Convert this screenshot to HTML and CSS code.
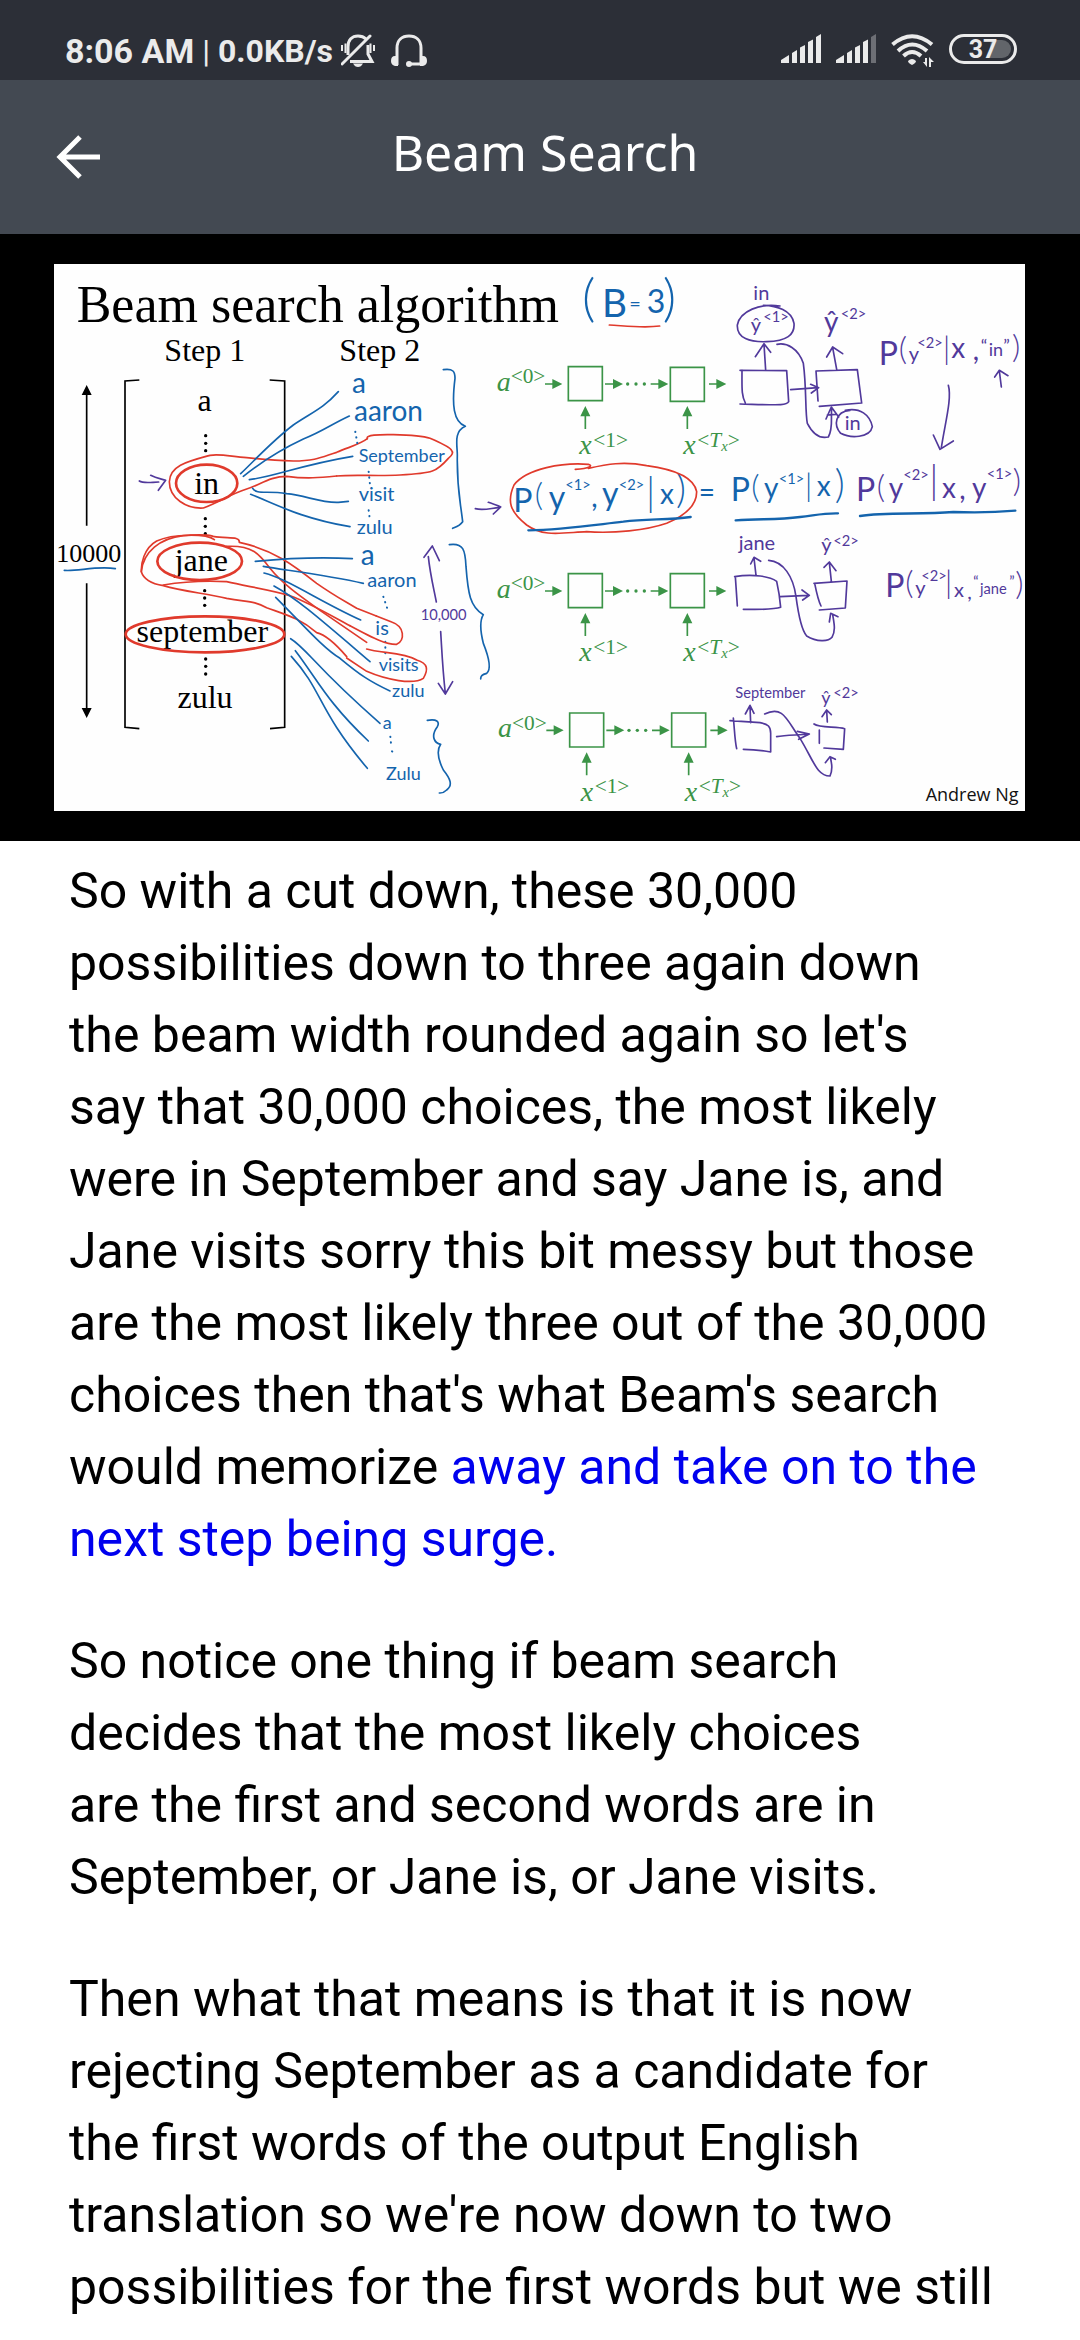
FILE: index.html
```html
<!DOCTYPE html>
<html lang="en">
<head>
<meta charset="utf-8">
<meta name="viewport" content="width=device-width, initial-scale=1">
<title>Beam Search</title>
<link rel="stylesheet" href="styles.css">
</head>
<body>
<div class="status">
  <div class="status-left">
    <span class="clock">8:06 AM</span>
    <span class="rate"><span class="bar">|</span> 0.0KB/s</span>
    <svg class="ico-bell" viewBox="0 0 34 34" width="34" height="34" aria-hidden="true">
      <g fill="none" stroke="#ebebeb" stroke-width="3">
        <path d="M7 21V13C7 6 11 2 17 2C20 2 23 3 25 5"/>
        <path d="M27 11V20L31 27.500H9"/>
        <path d="M1 30L29 2" stroke-linecap="round"/>
        <path d="M1 11V17M4.500 9.500V19M29.500 9.500V19M33 11V17" stroke-width="2"/>
      </g>
      <path d="M12 29.500H22Q20 33 17 33T12 29.500Z" fill="#ebebeb"/>
    </svg>
    <svg class="ico-head" viewBox="0 0 36 34" width="36" height="34" aria-hidden="true">
      <path d="M6 31V14C6 6 11 2 18 2S30 6 30 14V31M18 30H30" fill="none" stroke="#ebebeb" stroke-width="3"/>
      <path d="M7 22V32L4 32Q0 31 0 27Q0 22 4 22ZM29 22V32L32 32Q36 31 36 27Q36 22 32 22Z" fill="#ebebeb"/>
      <circle cx="18" cy="30" r="3" fill="#ebebeb"/>
    </svg>
  </div>
  <div class="status-right">
    <svg viewBox="0 0 40 34" width="40" height="34" aria-hidden="true">
      <g fill="#ebebeb"><path d="M0 29V26L8 21V29ZM11 29V19L16 16V29ZM19 29V13.500L24 11V29ZM27 29V8L32 5.500V29ZM35 29V3L40 0V29Z"/></g>
    </svg>
    <svg viewBox="0 0 40 34" width="40" height="34" aria-hidden="true">
      <path fill="#ebebeb" d="M0 29V26L8 21V29ZM11 29V19L16 16V29ZM19 29V13.500L24 11V29ZM27 29V8L32 5.500V29Z"/>
      <path fill="#6d6f75" d="M35 29V3L40 0V29Z"/>
    </svg>
    <svg viewBox="0 0 43 34" width="43" height="34" aria-hidden="true">
      <g fill="none" stroke="#ebebeb" stroke-width="4">
        <path d="M1.500 10.500Q21 -6 41 10.500"/><path d="M7 17Q21 4 36 17"/><path d="M12.500 22Q21 14 30 22"/>
      </g>
      <path d="M17 27Q21 23 25 27Q25 29 21 31Q17 29 17 27Z" fill="#ebebeb"/>
      <path d="M36 24V33L32 28H34V24ZM38 33V23L43 28H40V33Z" fill="#ebebeb"/>
    </svg>
    <svg viewBox="0 0 68 34" width="68" height="34" role="img" aria-label="Battery 37">
      <rect x="1.500" y="1.500" width="65" height="27" rx="13.500" fill="none" stroke="#ebebeb" stroke-width="3"/>
      <path d="M42 6H53A9 9 0 0 1 53 24H40Z" fill="#62656a"/>
      <text class="batt" x="34" y="24" text-anchor="middle">37</text>
    </svg>
  </div>
</div>
<header class="topbar">
  <button class="back" type="button" aria-label="Back">
    <svg viewBox="0 0 44 44" width="44" height="44" aria-hidden="true"><path d="M24 2L4 22L24 42M4 22H44" fill="none" stroke="#fff" stroke-width="5"/></svg>
  </button>
  <h1 class="title">Beam Search</h1>
</header>
<figure class="video">
<svg class="slide" viewBox="0 0 3240 1821" role="img" aria-label="Beam search algorithm slide">
  <rect x="162" y="90" width="2913" height="1641" fill="#fefefe"/>
  <!-- printed headings and vocabulary column -->
  <g transform="translate(120 63)">
    <g class="print">
      <text class="t156" x="110" y="200">Beam search algorithm</text>
      <text class="t96" x="373" y="319">Step 1</text>
      <text class="t96" x="898" y="319">Step 2</text>
      <text class="t96" x="494" y="469" text-anchor="middle">a</text>
      <text class="t96" x="500" y="718" text-anchor="middle">in</text>
      <text class="t96" x="484" y="948" text-anchor="middle">jane</text>
      <text class="t96" x="487" y="1161" text-anchor="middle">september</text>
      <text class="t96" x="495" y="1359" text-anchor="middle">zulu</text>
      <text class="t78" x="146" y="920" text-anchor="middle">10000</text>
    </g>
    <g fill="#000">
      <circle cx="497" cy="542" r="5"/><circle cx="497" cy="565" r="5"/><circle cx="497" cy="587" r="5"/>
      <circle cx="496" cy="791" r="5"/><circle cx="496" cy="814" r="5"/><circle cx="496" cy="836" r="5"/>
      <circle cx="494" cy="1007" r="5"/><circle cx="494" cy="1029" r="5"/><circle cx="494" cy="1051" r="5"/>
      <circle cx="497" cy="1212" r="5"/><circle cx="497" cy="1234" r="5"/><circle cx="497" cy="1257" r="5"/>
      <path d="M125 420L140 390L155 420ZM125 1359L140 1389L155 1359Z"/>
    </g>
    <g fill="none" stroke="#000" stroke-width="5">
      <path d="M140 415V812M140 985V1362M298 375L255 378V1417L298 1421M689 375L734 378V1417L690 1421"/>
    </g>
    <g class="red">
      <ellipse cx="500" cy="685" rx="92" ry="56" stroke-width="8"/>
      <ellipse cx="479" cy="919" rx="127" ry="56" stroke-width="8"/>
      <ellipse cx="495" cy="1138" rx="238" ry="54" stroke-width="8"/>
      <path d="M982 551C960 568 930 575 890 592C850 604 830 618 760 618C700 616 660 612 620 608C570 604 540 596 510 601C440 620 390 632 388 680C388 730 440 762 490 759C540 740 570 718 620 702C660 690 690 664 740 664C800 672 840 668 890 663"/>
      <path d="M523 854C500 836 400 835 350 858C310 880 303 930 304 950C310 970 330 985 370 992C430 1010 500 1015 560 1030C620 1042 640 1036 680 1058C740 1080 780 1090 830 1133C860 1140 890 1170 920 1205"/>
      <path d="M304 950C310 890 360 850 430 842C480 838 500 838 520 844C560 852 600 842 598 862C700 884 760 930 830 985C880 1020 900 1030 950 1060L1009 1083"/>
      <path d="M370 990C430 980 480 976 560 980C620 994 690 1004 750 1022C810 1044 870 1080 930 1112"/>
      <path d="M560 874C640 870 660 900 690 940C730 990 790 1030 840 1066L980 1162"/>
    </g>
    <g class="blue">
      <path d="M602 656C650 610 700 555 760 510C820 470 850 460 895 410"/>
      <path d="M610 664C660 624 730 580 790 552C850 528 870 510 928 483"/>
      <path d="M628 674C700 666 780 630 938 604"/>
      <path d="M638 700C650 720 680 706 740 716C800 722 840 744 895 742L925 739"/>
      <path d="M632 718C700 744 780 790 930 815"/>
      <path d="M646 919C720 912 820 904 937 911"/>
      <path d="M670 934C740 946 860 960 970 985"/>
      <path d="M672 954C740 970 840 1040 962 1095"/>
      <path d="M702 993C770 1030 840 1092 990 1220"/>
      <path d="M707 1027C790 1110 850 1180 900 1210C960 1260 990 1280 1050 1308"/>
      <path d="M752 1151C800 1180 820 1230 1020 1405"/>
      <path d="M766 1187C830 1270 860 1340 985 1458"/>
      <path d="M754 1204C850 1310 830 1360 982 1540"/>
      <path d="M73 946C110 950 170 932 226 941"/>
    </g>
    <path class="purple" d="M298 678C310 686 330 682 356 681M332 661C350 670 366 672 377 676L355 706"/>
  </g>
  <!-- second-step words -->
  <g transform="translate(960 63)">
    <g class="hand inkblue">
      <text class="t84" x="96" y="414">a</text>
      <text class="t84" x="102" y="497">aaron</text>
      <text class="t54" x="116" y="622">September</text>
      <text class="t60" x="116" y="738">visit</text>
      <text class="t60" x="110" y="838">zulu</text>
    </g>
    <g class="blue">
      <path d="M370 344C400 340 405 350 405 370C395 450 400 500 436 514C400 530 412 570 412 600C410 700 420 730 428 800C420 812 410 815 398 820"/>
      <path class="dots" d="M106 530L112 565M146 650L150 690M146 766L149 788"/>
    </g>
    <path class="red" d="M142 551C130 530 300 540 330 550C400 580 410 590 385 610C350 650 340 655 240 660C170 664 100 658 50 663"/>
    <path class="purple" d="M466 761C490 768 510 760 538 757M505 742C520 748 534 750 542 756L520 777"/>
  </g>
  <g transform="translate(960 888)">
    <g class="hand inkblue">
      <text class="t84" x="122" y="104">a</text>
      <text class="t60" x="142" y="172">aaron</text>
      <text class="t60" x="166" y="316">is</text>
      <text class="t54" x="176" y="422">visits</text>
      <text class="t54" x="216" y="500">zulu</text>
      <text class="t54" x="188" y="598">a</text>
      <text class="t54" x="198" y="750">Zulu</text>
    </g>
    <text class="hand inkpurple t44" x="302" y="270">10,000</text>
    <g class="blue">
      <path d="M388 44C430 38 436 60 438 110C444 190 450 230 490 254C480 270 480 300 490 340C510 390 512 420 500 430C485 434 482 438 482 447"/>
      <path d="M322 571C350 566 360 575 352 590C330 620 345 640 362 643C350 660 355 690 370 720C390 745 400 765 380 780Q370 790 358 789"/>
      <path class="dots" d="M190 200L206 248M196 335L196 370M211 620L214 650M216 664L222 668"/>
    </g>
    <path class="red" d="M169 258L215 276C255 290 255 330 230 343C200 344 170 330 90 287M140 357C180 370 250 366 290 390C325 400 325 420 310 445C280 465 200 450 140 424L80 384"/>
    <path class="purple" d="M325 80C330 130 340 170 349 216M312 82L337 48L358 92M362 305C366 370 368 420 376 490M355 460L376 492L398 455"/>
  </g>
  <!-- encoder chains -->
  <g class="chain" transform="translate(1440 63)">
    <path class="line" d="M265 335h102v102h-102zM571 337h102v102h-102zM195 387h30M375 387h32M512 387h30M687 387h30M316 522v-45M622 522v-45"/>
    <path class="solid" d="M217 372l30 15l-30 15zM399 372l30 15l-30 15zM535 372l30 15l-30 15zM709 372l30 15l-30 15zM301 484l15 -31l15 31zM607 484l15 -31l15 31z"/>
    <circle cx="443" cy="387" r="5"/><circle cx="468" cy="387" r="5"/><circle cx="493" cy="387" r="5"/>
    <text class="t84" x="50" y="408">a</text><text class="sup" x="92" y="385">&lt;0&gt;</text>
    <text class="t84" x="298" y="598">x</text><text class="sup" x="340" y="575">&lt;1&gt;</text>
    <text class="t84" x="610" y="598">x</text><text class="sup" x="652" y="575">&lt;<tspan class="it">T</tspan><tspan class="sub" dy="12">x</tspan><tspan dy="-12">&gt;</tspan></text>
  </g>
  <g class="chain" transform="translate(1440 684)">
    <path class="line" d="M265 335h102v102h-102zM571 335h102v102h-102zM195 387h30M375 387h32M512 387h30M687 387h30M316 522v-45M622 522v-45"/>
    <path class="solid" d="M217 372l30 15l-30 15zM399 372l30 15l-30 15zM535 372l30 15l-30 15zM709 372l30 15l-30 15zM301 484l15 -31l15 31zM607 484l15 -31l15 31z"/>
    <circle cx="443" cy="387" r="5"/><circle cx="468" cy="387" r="5"/><circle cx="493" cy="387" r="5"/>
    <text class="t84" x="50" y="408">a</text><text class="sup" x="92" y="385">&lt;0&gt;</text>
    <text class="t84" x="298" y="598">x</text><text class="sup" x="340" y="575">&lt;1&gt;</text>
    <text class="t84" x="610" y="598">x</text><text class="sup" x="652" y="575">&lt;<tspan class="it">T</tspan><tspan class="sub" dy="12">x</tspan><tspan dy="-12">&gt;</tspan></text>
  </g>
  <g class="chain" transform="translate(1444 1102)">
    <path class="line" d="M265 335h102v102h-102zM571 335h102v102h-102zM195 387h30M375 387h32M512 387h30M687 387h30M316 522v-45M622 522v-45"/>
    <path class="solid" d="M217 372l30 15l-30 15zM399 372l30 15l-30 15zM535 372l30 15l-30 15zM709 372l30 15l-30 15zM301 484l15 -31l15 31zM607 484l15 -31l15 31z"/>
    <circle cx="443" cy="387" r="5"/><circle cx="468" cy="387" r="5"/><circle cx="493" cy="387" r="5"/>
    <text class="t84" x="50" y="408">a</text><text class="sup" x="92" y="385">&lt;0&gt;</text>
    <text class="t84" x="298" y="598">x</text><text class="sup" x="340" y="575">&lt;1&gt;</text>
    <text class="t84" x="610" y="598">x</text><text class="sup" x="652" y="575">&lt;<tspan class="it">T</tspan><tspan class="sub" dy="12">x</tspan><tspan dy="-12">&gt;</tspan></text>
  </g>
  <!-- beam width and joint probability -->
  <g transform="translate(1440 63)">
    <text class="hand inkblue"><tspan class="t156 thin" x="306" y="182">(</tspan><tspan class="t116" x="366" y="187">B</tspan><tspan class="t60" x="448" y="168">=</tspan><tspan class="t96" x="500" y="174">3</tspan><tspan class="t156 thin" x="548" y="182">)</tspan></text>
    <text class="hand inkblue"><tspan class="t96" x="100" y="770">P</tspan><tspan class="t96 thin" x="164" y="752">(</tspan><tspan class="t96" x="206" y="762">y</tspan><tspan class="t44" x="256" y="706">&lt;1&gt;</tspan><tspan class="t84" x="334" y="756">,</tspan><tspan class="t96" x="366" y="750">y</tspan><tspan class="t44" x="416" y="704">&lt;2&gt;</tspan><tspan class="t116 thin" x="498" y="752">|</tspan><tspan class="t84" x="540" y="748">x</tspan><tspan class="t116 thin" x="588" y="744">)</tspan><tspan class="t84" x="656" y="740">=</tspan></text>
    <path class="red" d="M388 210C430 212 490 220 539 213"/>
    <path class="red" d="M286 643C330 640 340 632 325 628C250 622 140 640 102 690C80 740 90 770 140 810C190 846 240 834 320 830C400 836 500 826 560 805C620 780 650 750 650 710C640 660 560 640 500 632C430 618 380 628 325 640"/>
    <path class="blue thick" d="M145 826C250 824 340 810 430 800C500 790 560 796 632 786"/>
  </g>
  <!-- decoder sketches, top row -->
  <g transform="translate(2160 63)">
    <text class="hand inkblue"><tspan class="t96" x="32" y="738">P</tspan><tspan class="t96 thin" x="94" y="728">(</tspan><tspan class="t84" x="132" y="730">y</tspan><tspan class="t44" x="176" y="686">&lt;1&gt;</tspan><tspan class="t96 thin" x="254" y="724">|</tspan><tspan class="t84" x="290" y="722">x</tspan><tspan class="t116 thin" x="344" y="728">)</tspan></text>
    <path class="blue thick" d="M47 796C120 790 170 796 240 786C290 780 310 774 354 775M420 783C500 770 600 780 700 771C770 774 830 772 886 767"/>
    <g class="hand inkpurple">
      <text><tspan class="t96" x="408" y="738">P</tspan><tspan class="t96 thin" x="470" y="728">(</tspan><tspan class="t84" x="506" y="728">y</tspan><tspan class="t44" x="550" y="676">&lt;2&gt;</tspan><tspan class="t116 thin" x="628" y="718">|</tspan><tspan class="t84" x="666" y="730">x</tspan><tspan class="t84" x="718" y="732">,</tspan><tspan class="t84" x="756" y="730">y</tspan><tspan class="t44" x="800" y="672">&lt;1&gt;</tspan><tspan class="t96 thin" x="878" y="710">)</tspan></text>
      <text><tspan class="t96" x="476" y="330">P</tspan><tspan class="t96 thin" x="536" y="314">(</tspan><tspan class="t60" x="566" y="318">y</tspan><tspan class="t44" x="592" y="278">&lt;2&gt;</tspan><tspan class="t96 thin" x="668" y="312">|</tspan><tspan class="t84" x="694" y="310">x</tspan><tspan class="t84" x="758" y="316">,</tspan><tspan class="t54" x="782" y="292">“</tspan><tspan class="t54" x="806" y="302">in</tspan><tspan class="t54" x="850" y="292">”</tspan><tspan class="t96 thin" x="876" y="308">)</tspan></text>
      <text class="t60" x="100" y="136">in</text>
      <text><tspan class="t60" x="92" y="230">ŷ</tspan><tspan class="t44" x="130" y="202">&lt;1&gt;</tspan></text>
      <text><tspan class="t84" x="312" y="232">ŷ</tspan><tspan class="t44" x="362" y="192">&lt;2&gt;</tspan></text>
      <text class="t60" x="374" y="526">in</text>
    </g>
    <g class="purple">
      <path d="M180 153C120 144 60 168 52 210C50 250 90 262 140 260C200 258 225 240 222 205C215 165 170 152 130 151"/>
      <path d="M137 345L132 268M106 305L132 266L152 292M60 346L200 347L206 440C200 452 180 450 60 447M66 346C66 400 64 420 76 444M212 404L294 398M272 388L296 398L274 414"/>
      <path d="M171 268C200 262 235 280 250 325C260 400 255 470 262 505C280 540 300 552 325 546C340 520 332 490 335 460M318 492L334 456L356 486M322 480L348 478"/>
      <path d="M350 343L338 278M320 306L338 276L368 296M288 348L412 344L425 444L298 454M288 348L294 438M376 466C420 456 450 480 457 515C450 550 390 550 362 535C340 510 345 470 390 466"/>
      <path d="M844 396L838 348M824 366L838 346L864 362M685 391C696 430 676 500 664 578M640 540L660 583L700 558"/>
    </g>
  </g>
  <!-- decoder sketches, middle and bottom rows -->
  <g transform="translate(2160 858)">
    <g class="hand inkpurple">
      <text class="t60" x="56" y="90">jane</text>
      <text><tspan class="t60" x="304" y="96">ŷ</tspan><tspan class="t44" x="340" y="78">&lt;2&gt;</tspan></text>
      <text><tspan class="t96" x="496" y="232">P</tspan><tspan class="t96 thin" x="556" y="222">(</tspan><tspan class="t60" x="586" y="226">y</tspan><tspan class="t44" x="604" y="184">&lt;2&gt;</tspan><tspan class="t96 thin" x="674" y="220">|</tspan><tspan class="t60" x="702" y="232">x</tspan><tspan class="t60" x="742" y="236">,</tspan><tspan class="t44" x="760" y="200">“</tspan><tspan class="t44" x="780" y="222">jane</tspan><tspan class="t44" x="868" y="200">”</tspan><tspan class="t96 thin" x="886" y="224">)</tspan></text>
      <text class="t44" x="46" y="534">September</text>
      <text><tspan class="t54" x="304" y="552">ŷ</tspan><tspan class="t44" x="340" y="534">&lt;2&gt;</tspan></text>
    </g>
    <g class="purple">
      <path d="M108 166L102 114M92 132L102 112L122 124M44 170C100 160 150 170 170 184C176 210 180 240 182 262C160 270 120 268 70 268M46 170L52 258M180 230L266 226M246 210L268 226L248 240"/>
      <path d="M146 121C190 124 220 170 228 230C236 290 244 330 260 348C290 366 325 366 336 352C348 330 342 310 338 284M328 306L332 280L354 290"/>
      <path d="M334 184L328 128M312 142L328 126L348 152M282 190L381 183L376 264L298 270M284 190C290 220 294 240 303 258"/>
      <path d="M92 608L90 560M76 582L90 556L102 580M30 602L120 608C145 612 152 620 152 640V696C120 690 90 688 70 688M40 594C44 630 44 660 50 686M170 650C200 644 240 646 266 642M232 634L268 642L236 658"/>
      <path d="M134 582C190 555 200 600 240 655C280 720 290 768 330 768C342 740 332 730 332 712M316 728L330 710L346 718"/>
      <path d="M322 606L320 572M306 590L320 570L334 584M282 612C300 625 350 618 374 626L370 688L312 684M298 630V670"/>
    </g>
    <text class="credit" x="617" y="843">Andrew Ng</text>
  </g>
</svg>
</figure>
<main class="transcript">
  <p>So with a cut down, these 30,000 possibilities down to three again down the beam width rounded again so let's say that 30,000 choices, the most likely were in September and say Jane is, and Jane visits sorry this bit messy but those are the most likely three out of the 30,000 choices then that's what Beam's search would memorize <span class="active">away and take on to the next step being surge.</span></p>
  <p>So notice one thing if beam search decides that the most likely choices<br>are the first and second words are in September, or Jane is, or Jane visits.</p>
  <p>Then what that means is that it is now rejecting September as a candidate for the first words of the output English translation so we're now down to two possibilities for the first words but we still</p>
</main>
</body>
</html>
```
FILE: styles.css
```css
* { box-sizing: border-box; }
body { margin: 0; background: #fff; color: #000; font-family: Roboto, sans-serif; }

.status {
  display: flex; justify-content: space-between;
  height: 80px; padding: 34px 63px 0 65px;
  background: #2c2f37; color: #ebebeb;
}
.status-left { display: flex; gap: 8px; font-weight: 700; line-height: 34px; }
.clock { font-size: 34px; }
.rate { font-size: 32px; }
.bar { font-weight: 400; }
.ico-head { margin-left: 8px; }
.status-right { display: flex; gap: 15px; }
.batt { font: 700 25px Roboto, sans-serif; fill: #ebebeb; }

.topbar {
  display: grid; grid-template-columns: 100px 1fr 90px; align-items: center;
  height: 154px; background: #434952; color: #fff;
}
.back { display: flex; justify-content: flex-end; padding: 0; border: 0; background: none; }
.title { margin: 0; padding-bottom: 10px; text-align: center; font: 400 50px/68px "Noto Sans", sans-serif; }

.video { margin: 0; background: #000; }
.slide { display: block; width: 100%; height: auto; }

.print { font-family: "Liberation Serif", serif; fill: #000; }
.hand { font-family: Lato, sans-serif; }
.thin { font-weight: 300; }
.t156 { font-size: 156px; }
.t116 { font-size: 116px; }
.t96 { font-size: 96px; }
.t84 { font-size: 84px; }
.t78 { font-size: 78px; }
.t60 { font-size: 60px; }
.t54 { font-size: 54px; }
.t44 { font-size: 44px; }
.inkblue { fill: #1464ad; }
.inkpurple { fill: #51399b; }
.blue, .red, .purple { fill: none; stroke-width: 5; stroke-linecap: round; stroke-linejoin: round; }
.blue { stroke: #1464ad; }
.red { stroke: #e03a2c; }
.purple { stroke: #51399b; }
.thick { stroke-width: 7; }
.dots { stroke-dasharray: 1 16; stroke-width: 6; }
.chain { fill: #3b9447; font-family: "Liberation Serif", serif; font-style: italic; }
.line { fill: none; stroke: #3b9447; stroke-width: 5; }
.sup { font-size: 64px; font-style: normal; }
.it { font-style: italic; }
.sub { font-size: 44px; font-style: italic; }
.credit { font: 400 54px "Open Sans", sans-serif; fill: #111; }

.transcript { padding: 14px 86px 0 69px; font-size: 50px; line-height: 72px; }
.transcript p { margin: 0 0 50px; }
.active { color: #0000ee; }
```
